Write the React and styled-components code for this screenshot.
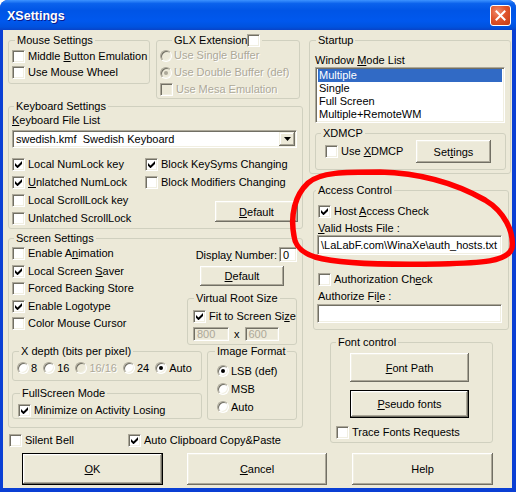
import React from 'react';
import styled, { createGlobalStyle } from 'styled-components';

const GlobalStyle = createGlobalStyle`
  html, body {
    margin: 0;
    padding: 0;
    background: #ffffff;
  }
  body {
    font-family: "Liberation Sans", Arial, sans-serif;
    font-size: 11px;
    color: #000;
  }
  u {
    text-decoration-thickness: 1px;
    text-underline-offset: 1px;
  }
`;

// XP colours
const FACE = '#ECE9D8';
const SHADOW = '#ACA899';
const DARK = '#716F64';
const LIGHT = '#F1EFE2';

const Window = styled.div`
  position: relative;
  width: 516px;
  height: 492px;
  display: flex;
  flex-direction: column;
  background: #0a3fd4;
  border-radius: 8px 8px 0 0;
  overflow: hidden;
`;

const TitleBar = styled.div`
  flex: none;
  height: 30px;
  display: flex;
  align-items: center;
  justify-content: space-between;
  padding: 0 5px 0 7px;
  background: linear-gradient(
    180deg,
    #3d93ff 0%,
    #0b62ec 12%,
    #0055e6 35%,
    #0058ee 70%,
    #0052de 90%,
    #0843c8 100%
  );
`;

const Title = styled.span`
  font-family: "Liberation Sans", Arial, sans-serif;
  font-weight: bold;
  font-size: 12.5px;
  color: #fff;
  text-shadow: 1px 1px 0 #0a1a8a;
  padding-top: 2px;
`;

const CloseButton = styled.span`
  width: 21px;
  height: 21px;
  box-sizing: border-box;
  border: 1px solid #fff;
  border-radius: 3px;
  background: radial-gradient(circle at 35% 30%, #f08a6c 0%, #e0552c 45%, #c43b12 100%);
  display: flex;
  align-items: center;
  justify-content: center;
`;

const Body = styled.div`
  flex: 1;
  margin: 0 4px 4px 3px;
  padding: 4px 0 0 5px;
  background: ${FACE};
  display: flex;
  flex-direction: column;
`;

const Columns = styled.div`
  height: 414px;
  display: flex;
  gap: 6px;
  align-items: flex-start;
`;

const Column = styled.div`
  width: ${(p) => p.$w}px;
  display: flex;
  flex-direction: column;
  align-items: flex-start;
`;

const TopRow = styled.div`
  display: flex;
  gap: 6px;
`;

const Group = styled.fieldset`
  box-sizing: border-box;
  flex: none;
  min-width: 0;
  width: ${(p) => p.$w}px;
  height: ${(p) => p.$h}px;
  margin: ${(p) => p.$m || 0};
  padding: ${(p) => p.$pt || 0}px ${(p) => p.$pr || 0}px 0 ${(p) => p.$pl || 0}px;
  border: 1px solid #d0d0bf;
  border-radius: 3px;
  display: flex;
  flex-direction: column;
  align-items: flex-start;
`;

const Legend = styled.legend`
  padding: 0 2px;
  margin-left: ${(p) => p.$ml}px;
  height: 13px;
  line-height: 13px;
  white-space: nowrap;
`;

const LegendInner = styled.span`
  display: inline-flex;
  align-items: center;
`;

const Row = styled.label`
  display: flex;
  align-items: center;
  gap: ${(p) => (p.$gap != null ? p.$gap : 3)}px;
  height: ${(p) => p.$h || 16}px;
  margin: ${(p) => p.$mt || 0}px 0 0 ${(p) => p.$ml || 0}px;
  white-space: nowrap;
`;

const Caption = styled.span`
  line-height: 13px;
  color: ${(p) => (p.$disabled ? SHADOW : '#000')};
  text-shadow: ${(p) => (p.$disabled ? '1px 1px 0 #fff' : 'none')};
`;

const Box = styled.span`
  flex: none;
  box-sizing: border-box;
  width: 13px;
  height: 13px;
  background: ${(p) => (p.$disabled ? FACE : '#fff')};
  border: 1px solid;
  border-color: ${SHADOW} #fff #fff ${SHADOW};
  box-shadow: inset 1px 1px 0 ${DARK}, inset -1px -1px 0 ${LIGHT};
  display: flex;
  align-items: center;
  justify-content: center;
`;

const Circle = styled.span`
  flex: none;
  box-sizing: border-box;
  width: 12px;
  height: 12px;
  border-radius: 50%;
  background: ${(p) => (p.$disabled ? FACE : '#fff')};
  border: 1px solid;
  border-color: ${SHADOW} #fff #fff ${SHADOW};
  box-shadow: inset 1px 1px 0 ${DARK}, inset -1px -1px 0 ${LIGHT};
  display: flex;
  align-items: center;
  justify-content: center;
  &::after {
    content: '';
    display: ${(p) => (p.$on ? 'block' : 'none')};
    width: 4px;
    height: 4px;
    border-radius: 50%;
    background: ${(p) => (p.$disabled ? SHADOW : '#000')};
  }
`;

const Button = styled.button`
  flex: none;
  box-sizing: border-box;
  width: ${(p) => p.$w}px;
  height: ${(p) => p.$h}px;
  margin: ${(p) => p.$m || 0};
  padding: 0;
  font: inherit;
  color: #000;
  background: ${FACE};
  border: ${(p) => (p.$def ? '1px solid #000' : 'none')};
  border-radius: 0;
  box-shadow: inset -1px -1px 0 ${DARK}, inset 1px 1px 0 #fff, inset -2px -2px 0 ${SHADOW},
    inset 2px 2px 0 ${LIGHT};
`;

const Sunken = styled.div`
  box-sizing: border-box;
  flex: none;
  width: ${(p) => p.$w}px;
  height: ${(p) => p.$h}px;
  margin: ${(p) => p.$m || 0};
  padding-left: 3px;
  background: ${(p) => (p.$disabled ? FACE : '#fff')};
  color: ${(p) => (p.$disabled ? SHADOW : '#000')};
  border: 1px solid;
  border-color: ${SHADOW} #fff #fff ${SHADOW};
  box-shadow: inset 1px 1px 0 ${DARK}, inset -1px -1px 0 ${LIGHT};
  display: flex;
  align-items: center;
  white-space: pre;
  overflow: hidden;
`;

const DropButton = styled.span`
  box-sizing: border-box;
  width: 16px;
  height: 14px;
  margin-left: auto;
  margin-right: 1px;
  background: ${FACE};
  box-shadow: inset -1px -1px 0 ${DARK}, inset 1px 1px 0 ${LIGHT}, inset -2px -2px 0 ${SHADOW},
    inset 2px 2px 0 #fff;
  display: flex;
  align-items: center;
  justify-content: center;
`;

const Label = styled.div`
  line-height: 14px;
  margin: ${(p) => p.$m || 0};
  white-space: nowrap;
`;

const List = styled.div`
  box-sizing: border-box;
  width: 190px;
  height: 56px;
  padding: 1px 2px;
  background: #fff;
  border: 1px solid;
  border-color: ${SHADOW} #fff #fff ${SHADOW};
  box-shadow: inset 1px 1px 0 ${DARK}, inset -1px -1px 0 ${LIGHT};
`;

const ListItem = styled.div`
  height: 13px;
  line-height: 13px;
  padding-left: 1px;
  background: ${(p) => (p.$sel ? '#316AC5' : 'transparent')};
  color: ${(p) => (p.$sel ? '#fff' : '#000')};
`;

const KeyGrid = styled.div`
  margin-top: 7px;
  width: 290px;
  display: grid;
  grid-template-columns: 133px 1fr;
  grid-template-rows: repeat(4, 18px);
  align-items: center;
`;

const KeyDefault = styled(Button)`
  grid-column: 2;
  grid-row: 3 / 5;
  align-self: start;
  justify-self: end;
  margin: 10px 4px 0 0;
`;

const SplitGrid = styled.div`
  display: grid;
  grid-template-columns: ${(p) => p.$cols};
  column-gap: ${(p) => p.$gap || 0}px;
  align-items: start;
`;

const Stack = styled.div`
  display: flex;
  flex-direction: column;
  align-items: ${(p) => p.$align || 'flex-start'};
`;

const InlineRow = styled.div`
  display: flex;
  align-items: center;
  gap: ${(p) => p.$gap || 0}px;
  margin: ${(p) => p.$m || 0};
  width: ${(p) => (p.$full ? '100%' : 'auto')};
  justify-content: ${(p) => p.$justify || 'flex-start'};
  height: ${(p) => (p.$h ? `${p.$h}px` : 'auto')};
`;

const BellRow = styled.div`
  margin-top: 4px;
  display: grid;
  grid-template-columns: 119px auto;
  padding-left: 1px;
`;

const ButtonRow = styled.div`
  margin-top: 5px;
  padding-left: 14px;
  display: flex;
  gap: 24px;
`;

const Overlay = styled.svg`
  position: absolute;
  left: 0;
  top: 0;
  pointer-events: none;
`;

function Tick() {
  return (
    <svg width="7" height="7" viewBox="0 0 7 7">
      <polygon points="0,2 2.5,4.5 7,0 7,3 2.5,7.3 0,4.8" fill="#000" />
    </svg>
  );
}

function Check({ label, checked, disabled, h, ml, mt }) {
  return (
    <Row $h={h} $ml={ml} $mt={mt}>
      <Box $disabled={disabled}>{checked && <Tick />}</Box>
      <Caption $disabled={disabled}>{label}</Caption>
    </Row>
  );
}

function Radio({ label, on, disabled, h }) {
  return (
    <Row $h={h} $gap={2}>
      <Circle $on={on} $disabled={disabled} />
      <Caption $disabled={disabled}>{label}</Caption>
    </Row>
  );
}

// x = where the caption text starts from the box's left edge
function GroupBox({ title, x = 8, pl = 3, pt = 0, pr = 0, w, h, m, children }) {
  return (
    <Group $w={w} $h={h} $pl={pl} $pt={pt} $pr={pr} $m={m}>
      <Legend $ml={x - 3 - pl}>{title}</Legend>
      {children}
    </Group>
  );
}

export default function App() {
  return (
    <>
      <GlobalStyle />
      <Window>
        <TitleBar>
          <Title>XSettings</Title>
          <CloseButton>
            <svg width="11" height="11" viewBox="0 0 11 11">
              <path d="M1.5 1.5 L9.5 9.5 M9.5 1.5 L1.5 9.5" stroke="#fff" strokeWidth="2" strokeLinecap="square" />
            </svg>
          </CloseButton>
        </TitleBar>

        <Body>
          <Columns>
            <Column $w={295}>
              <TopRow>
                <GroupBox title="Mouse Settings" x={9} pl={3} pt={1} w={142} h={50}>
                  <Check label={<>Middle <u>B</u>utton Emulation</>} />
                  <Check label="Use Mouse Wheel" />
                </GroupBox>
                <GroupBox
                  title={
                    <LegendInner>
                      GLX Extension
                      <Box />
                    </LegendInner>
                  }
                  x={18}
                  pl={3}
                  w={144}
                  h={65}
                >
                  <Radio label="Use Single Buffer" disabled h={17} />
                  <Radio label="Use Double Buffer (def)" on disabled h={17} />
                  <Check label="Use Mesa Emulation" disabled h={17} />
                </GroupBox>
              </TopRow>

              <GroupBox title="Keyboard Settings" x={8} pl={3} w={295} h={129} m="1px 0 0 0">
                <Label>
                  <u>K</u>eyboard File List
                </Label>
                <Sunken $w={285} $h={18} $m="3px 0 0 0">
                  {'swedish.kmf  Swedish Keyboard'}
                  <DropButton>
                    <svg width="7" height="4" viewBox="0 0 7 4">
                      <polygon points="0,0 7,0 3.5,4" fill="#000" />
                    </svg>
                  </DropButton>
                </Sunken>
                <KeyGrid>
                  <Check label="Local NumLock key" checked />
                  <Check label="Block KeySyms Changing" checked />
                  <Check
                    label={
                      <>
                        <u>U</u>nlatched NumLock
                      </>
                    }
                    checked
                  />
                  <Check label="Block Modifiers Changing" />
                  <Check label="Local ScrollLock key" />
                  <KeyDefault $w={83} $h={21}>
                    <u>D</u>efault
                  </KeyDefault>
                  <Check label="Unlatched ScrollLock" />
                </KeyGrid>
              </GroupBox>

              <GroupBox title="Screen Settings" x={8} pl={3} pr={5} w={295} h={196} m="3px 0 0 0">
                <SplitGrid $cols="175px 110px">
                  <Stack>
                    <Check h={17.5} label={<>Enable A<u>n</u>imation</>} />
                    <Check h={17.5} checked label={<>Local Screen <u>S</u>aver</>} />
                    <Check h={17.5} label="Forced Backing Store" />
                    <Check h={17.5} checked label="Enable Logotype" />
                    <Check h={17.5} label="Color Mouse Cursor" />
                  </Stack>
                  <Stack $align="center">
                    <InlineRow $gap={2} $full $justify="flex-end" $m="2px 0 0 0">
                      <span>
                        Displa<u>y</u> Number:
                      </span>
                      <Sunken $w={18} $h={15}>
                        0
                      </Sunken>
                    </InlineRow>
                    <Button $w={84} $h={20} $m="4px 0 0 0">
                      <u>D</u>efault
                    </Button>
                    <GroupBox title="Virtual Root Size" x={9} pl={5} pt={3} w={110} h={53} m="6px 0 0 0">
                      <Check checked label={<>Fit to Screen Si<u>z</u>e</>} />
                      <InlineRow $gap={5} $m="3px 0 0 0">
                        <Sunken $w={36} $h={14} $disabled>
                          800
                        </Sunken>
                        <span>x</span>
                        <Sunken $w={34} $h={14} $disabled>
                          600
                        </Sunken>
                      </InlineRow>
                    </GroupBox>
                  </Stack>
                </SplitGrid>

                <SplitGrid $cols="190px 90px" $gap={5}>
                  <Stack>
                    <GroupBox title="X depth (bits per pixel)" x={9} pl={4} pt={2} w={190} h={36}>
                      <InlineRow $gap={6}>
                        <Radio label="8" />
                        <Radio label="16" />
                        <Radio label="16/16" disabled />
                        <Radio label="24" />
                        <Radio label="Auto" on />
                      </InlineRow>
                    </GroupBox>
                    <GroupBox title="FullScreen Mode" x={10} pl={5} pt={2} w={190} h={32} m="6px 0 0 0">
                      <Check checked label="Minimize on Activity Losing" />
                    </GroupBox>
                  </Stack>
                  <GroupBox title="Image Format" x={10} pl={9} pt={4} w={90} h={75}>
                    <Radio h={18} on label="LSB (def)" />
                    <Radio h={18} label="MSB" />
                    <Radio h={18} label="Auto" />
                  </GroupBox>
                </SplitGrid>
              </GroupBox>

              <BellRow>
                <Check label="Silent Bell" />
                <Check checked label="Auto Clipboard Copy&Paste" />
              </BellRow>
            </Column>

            <Column $w={202}>
              <GroupBox title="Startup" x={9} pl={5} pt={6} w={202} h={140}>
                <Label>
                  Window <u>M</u>ode List
                </Label>
                <List>
                  <ListItem $sel>Multiple</ListItem>
                  <ListItem>Single</ListItem>
                  <ListItem>Full Screen</ListItem>
                  <ListItem>Multiple+RemoteWM</ListItem>
                </List>
                <GroupBox title="XDMCP" x={8} pl={9} pr={14} w={191} h={43} m="4px 0 0 0">
                  <InlineRow $full $h={23}>
                    <Check label={<>Use <u>X</u>DMCP</>} />
                    <Button $w={75} $h={23} $m="0 0 0 auto">
                      Set<u>t</u>ings
                    </Button>
                  </InlineRow>
                </GroupBox>
              </GroupBox>

              <GroupBox title="Access Control" x={5} pl={4} pt={6} w={196} h={146} m="10px 0 0 4px">
                <Check checked label={<>Host <u>A</u>ccess Check</>} />
                <Label $m="2px 0 0 0">
                  <u>V</u>alid Hosts File :
                </Label>
                <Sunken $w={185} $h={20} $m="0 0 0 -1px">
                  {'\\LaLabF.com\\WinaXe\\auth_hosts.txt'}
                </Sunken>
                <Check label={<>Authorization Ch<u>e</u>ck</>} mt={16} />
                <Label $m="2px 0 0 0">
                  Authorize Fi<u>l</u>e :
                </Label>
                <Sunken $w={185} $h={19} $m="1px 0 0 -1px" />
              </GroupBox>

              <GroupBox title="Font control" x={8} pl={5} pt={4} w={163} h={107} m="6px 0 0 21px">
                <Button $w={119} $h={29} $m="0 0 0 14px">
                  <u>F</u>ont Path
                </Button>
                <Button $w={119} $h={28} $m="8px 0 0 14px" $def>
                  <u>P</u>seudo fonts
                </Button>
                <InlineRow $m="6px 0 0 0">
                  <Check label="Trace Fonts Requests" />
                </InlineRow>
              </GroupBox>
            </Column>
          </Columns>

          <ButtonRow>
            <Button $w={141} $h={32} $def>
              <u>O</u>K
            </Button>
            <Button $w={140} $h={32}>
              <u>C</u>ancel
            </Button>
            <Button $w={141} $h={32} $m="0 0 0 1px">
              Help
            </Button>
          </ButtonRow>
        </Body>

        <Overlay width="516" height="492" viewBox="0 0 516 492">
          <path
            d="M294 236 C290 215 295 195 308 183 C320 172 345 172 380 172 C420 173 455 183 485 200 C505 212 514 232 512 248 C508 262 480 263 440 264 C390 265 340 264 315 257 C300 252 295 245 294 236 Z"
            fill="none"
            stroke="#ff0000"
            strokeWidth="5.5"
            strokeLinejoin="round"
          />
        </Overlay>
      </Window>
    </>
  );
}
